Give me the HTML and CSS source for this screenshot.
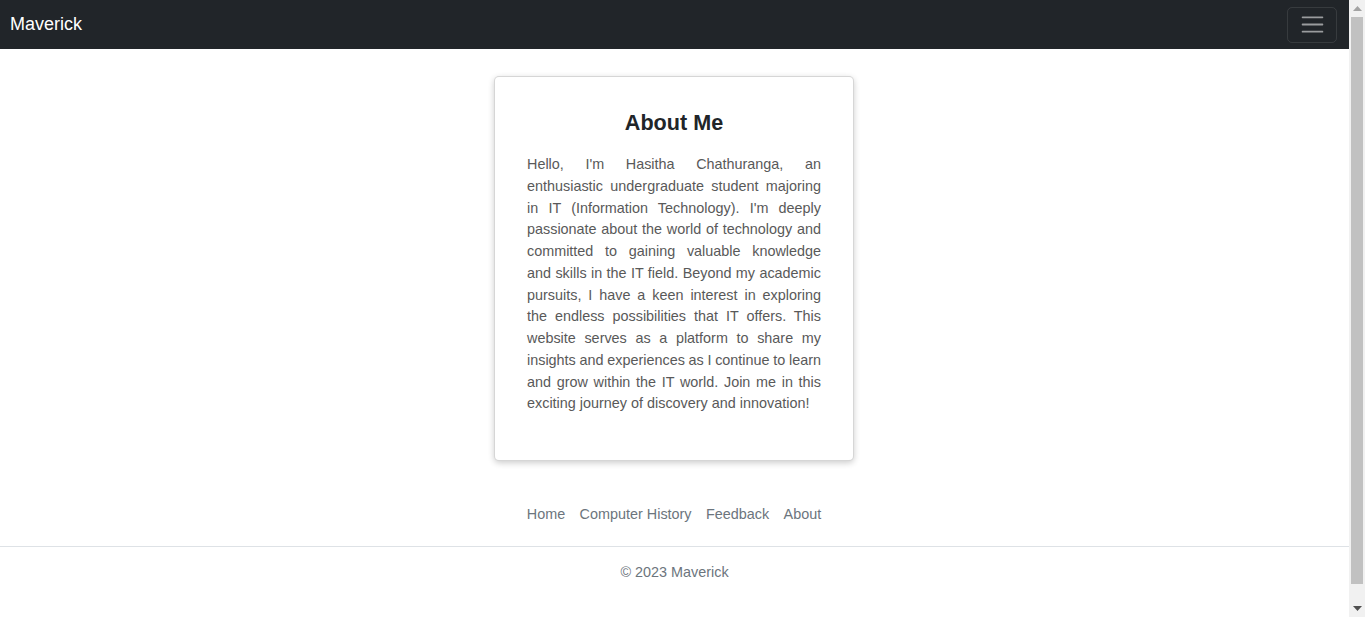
FILE: index.html
```html
<!DOCTYPE html>
<html lang="en">
<head>
<meta charset="utf-8">
<title>About Me - Maverick</title>
<link rel="stylesheet" href="styles.css">
</head>
<body>
<nav class="navbar">
  <a class="brand" href="#">Maverick</a>
  <button class="toggler" type="button" aria-label="Toggle navigation">
    <svg class="toggler-icon" viewBox="0 0 30 30" width="27" height="27" aria-hidden="true">
      <path d="M4 7h22M4 15h22M4 23h22" stroke="rgba(255,255,255,0.55)" stroke-width="2" stroke-linecap="round" fill="none"/>
    </svg>
  </button>
</nav>

<main class="content">
  <section class="card">
    <h4 class="card-title">About Me</h4>
    <p class="about-text">
      <span class="line">Hello, I'm Hasitha Chathuranga, an</span>
      <span class="line">enthusiastic undergraduate student majoring</span>
      <span class="line">in IT (Information Technology). I'm deeply</span>
      <span class="line">passionate about the world of technology and</span>
      <span class="line">committed to gaining valuable knowledge</span>
      <span class="line">and skills in the IT field. Beyond my academic</span>
      <span class="line">pursuits, I have a keen interest in exploring</span>
      <span class="line">the endless possibilities that IT offers. This</span>
      <span class="line">website serves as a platform to share my</span>
      <span class="line">insights and experiences as I continue to learn</span>
      <span class="line">and grow within the IT world. Join me in this</span>
      <span class="line line-last">exciting journey of discovery and innovation!</span>
    </p>
  </section>
</main>

<footer class="footer">
  <ul class="footer-nav">
    <li><a class="footer-link" href="#">Home</a></li>
    <li><a class="footer-link" href="#">Computer History</a></li>
    <li><a class="footer-link" href="#">Feedback</a></li>
    <li><a class="footer-link" href="#">About</a></li>
  </ul>
  <p class="copyright">© 2023 Maverick</p>
</footer>

<div class="scrollbar" aria-hidden="true">
  <div class="scroll-btn">
    <svg width="9" height="5" viewBox="0 0 9 5"><path d="M0 5L4.5 0L9 5Z" fill="#a3a3a3"/></svg>
  </div>
  <div class="scroll-track">
    <div class="scroll-thumb"></div>
  </div>
  <div class="scroll-btn">
    <svg width="9" height="5" viewBox="0 0 9 5"><path d="M0 0L4.5 5L9 0Z" fill="#505050"/></svg>
  </div>
</div>
</body>
</html>
```

FILE: styles.css
```css
* {
  box-sizing: border-box;
}

html {
  overflow: hidden;
}

html, body {
  margin: 0;
  padding: 0;
}

body {
  padding-right: 16px;
  font-family: "Liberation Sans", Arial, sans-serif;
  font-size: 14.4px;
  line-height: 21.6px;
  color: #212529;
  background: #fff;
}

a {
  text-decoration: none;
}

.navbar {
  display: flex;
  align-items: center;
  justify-content: space-between;
  height: 49px;
  padding: 0 12px 0 10px;
  background: #212529;
}

.brand {
  color: #fff;
  font-size: 18px;
  line-height: 27px;
}

.toggler {
  display: flex;
  align-items: center;
  justify-content: center;
  width: 50px;
  height: 36px;
  padding: 0;
  background: transparent;
  border: 1px solid rgba(255, 255, 255, 0.1);
  border-radius: 5px;
}

.toggler-icon {
  display: block;
}

.content {
  display: flex;
  justify-content: center;
  padding-top: 27px;
  padding-right: 1px;
}

.card {
  width: 360px;
  padding: 33px 32px 33px;
  background: #fff;
  border: 1px solid rgba(0, 0, 0, 0.16);
  border-radius: 5px;
  box-shadow: 0 2px 6px rgba(0, 0, 0, 0.2);
}

.card-title {
  margin: 0 0 18px;
  font-size: 21.6px;
  line-height: 26px;
  font-weight: 700;
  text-align: center;
  color: #212529;
}

.about-text {
  margin: 0 0 12px;
  line-height: 21.75px;
  color: #595959;
  word-spacing: -1px;
}

.line {
  display: block;
  text-align: justify;
  text-align-last: justify;
}

.line-last {
  text-align-last: left;
  word-spacing: 0;
}

.footer {
  margin: 21.6px 0;
  padding: 14.4px 0;
}

.footer-nav {
  display: flex;
  justify-content: center;
  list-style: none;
  margin: 0 0 14.4px;
  padding: 0 1px 13.4px 0;
  border-bottom: 1px solid #dee2e6;
}

.footer-link {
  display: block;
  padding: 7.2px;
  color: #6c757d;
}

.copyright {
  margin: 0 0 14.4px;
  text-align: center;
  color: #6c757d;
}

.scrollbar {
  position: fixed;
  top: 0;
  right: 0;
  bottom: 0;
  width: 16px;
  display: flex;
  flex-direction: column;
  background: #f1f1f1;
}

.scroll-btn {
  flex: 0 0 17px;
  display: flex;
  align-items: center;
  justify-content: center;
}

.scroll-track {
  flex: 1;
  display: flex;
  flex-direction: column;
  padding: 0 2px;
}

.scroll-thumb {
  height: 567px;
  background: #c1c1c1;
}
```
